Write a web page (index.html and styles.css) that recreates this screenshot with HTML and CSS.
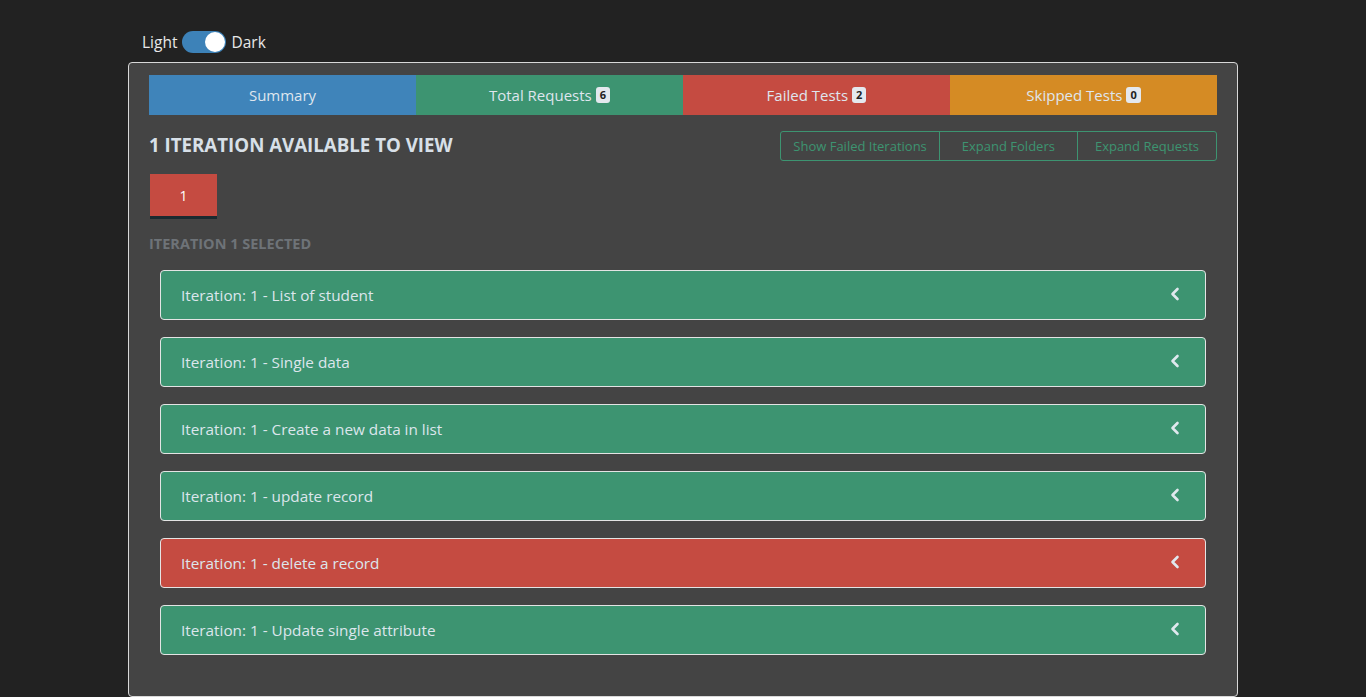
FILE: index.html
```html
<!DOCTYPE html>
<html lang="en">
<head>
<meta charset="utf-8">
<title>Report</title>
<link rel="stylesheet" href="styles.css">
</head>
<body>
<div class="page">
  <div class="theme-toggle">
    <span class="tlabel">Light</span>
    <span class="switch"><span class="knob"></span></span>
    <span class="tlabel">Dark</span>
  </div>
  <div class="panel">
    <div class="tabs">
      <div class="tab tab-blue">Summary</div>
      <div class="tab tab-green">Total Requests <span class="badge">6</span></div>
      <div class="tab tab-red">Failed Tests <span class="badge">2</span></div>
      <div class="tab tab-orange">Skipped Tests <span class="badge">0</span></div>
    </div>
    <div class="head-row">
      <h2 class="title">1 ITERATION AVAILABLE TO VIEW</h2>
      <div class="btn-group">
        <button class="obtn">Show Failed Iterations</button>
        <button class="obtn">Expand Folders</button>
        <button class="obtn">Expand Requests</button>
      </div>
    </div>
    <div class="iter-row">
      <button class="iter-btn">1</button>
    </div>
    <div class="selected">ITERATION 1 SELECTED</div>
    <div class="cards">
      <div class="card card-green"><span>Iteration: 1 - List of student</span><svg class="chev" viewBox="0 0 10 14" width="10" height="14"><path d="M7.5 2 L2.5 7 L7.5 12" fill="none" stroke="currentColor" stroke-width="2.6" stroke-linecap="round" stroke-linejoin="round"/></svg></div>
      <div class="card card-green"><span>Iteration: 1 - Single data</span><svg class="chev" viewBox="0 0 10 14" width="10" height="14"><path d="M7.5 2 L2.5 7 L7.5 12" fill="none" stroke="currentColor" stroke-width="2.6" stroke-linecap="round" stroke-linejoin="round"/></svg></div>
      <div class="card card-green"><span>Iteration: 1 - Create a new data in list</span><svg class="chev" viewBox="0 0 10 14" width="10" height="14"><path d="M7.5 2 L2.5 7 L7.5 12" fill="none" stroke="currentColor" stroke-width="2.6" stroke-linecap="round" stroke-linejoin="round"/></svg></div>
      <div class="card card-green"><span>Iteration: 1 - update record</span><svg class="chev" viewBox="0 0 10 14" width="10" height="14"><path d="M7.5 2 L2.5 7 L7.5 12" fill="none" stroke="currentColor" stroke-width="2.6" stroke-linecap="round" stroke-linejoin="round"/></svg></div>
      <div class="card card-red"><span>Iteration: 1 - delete a record</span><svg class="chev" viewBox="0 0 10 14" width="10" height="14"><path d="M7.5 2 L2.5 7 L7.5 12" fill="none" stroke="currentColor" stroke-width="2.6" stroke-linecap="round" stroke-linejoin="round"/></svg></div>
      <div class="card card-green"><span>Iteration: 1 - Update single attribute</span><svg class="chev" viewBox="0 0 10 14" width="10" height="14"><path d="M7.5 2 L2.5 7 L7.5 12" fill="none" stroke="currentColor" stroke-width="2.6" stroke-linecap="round" stroke-linejoin="round"/></svg></div>
    </div>
  </div>
</div>
</body>
</html>
```
FILE: styles.css
```css
html, body {
  margin: 0;
  padding: 0;
  background: #222222;
  font-family: "Open Sans", "Noto Sans", sans-serif;
  color: #dde3ea;
  overflow: hidden;
}
.page {
  width: 1110px;
  margin: 0 auto;
  padding-top: 29px;
}
.theme-toggle {
  display: flex;
  align-items: center;
  gap: 5px;
  padding-left: 14px;
  height: 26px;
  margin-bottom: 7px;
  font-size: 15.5px;
  color: #e8e8e8;
}
.switch {
  width: 44px;
  height: 22px;
  border-radius: 11px;
  background: #3d82b8;
  position: relative;
  display: inline-block;
}
.knob {
  position: absolute;
  right: 1px;
  top: 1px;
  width: 20px;
  height: 20px;
  border-radius: 50%;
  background: #ffffff;
}
.panel {
  box-sizing: border-box;
  border: 1px solid #d8d8d8;
  border-radius: 4px;
  background: #444444;
  padding: 12px 20px 0 20px;
  height: 635px;
}
.tabs {
  display: grid;
  grid-template-columns: repeat(4, 1fr);
  height: 40px;
}
.tab {
  display: flex;
  align-items: center;
  justify-content: center;
  gap: 4px;
  font-size: 15px;
  color: #dfe6ee;
}
.tab-blue { background: #3f84ba; }
.tab-green { background: #3d9471; }
.tab-red { background: #c54b41; }
.tab-orange { background: #d58b24; }
.badge {
  display: inline-block;
  background: #e4e8ee;
  color: #222;
  font-size: 11px;
  font-weight: 700;
  padding: 1px 4px;
  border-radius: 3px;
  line-height: 14px;
}
.head-row {
  display: flex;
  justify-content: space-between;
  align-items: flex-start;
  margin-top: 16px;
}
.title {
  margin: 1px 0 0 0;
  font-size: 18.7px;
  font-weight: 700;
  color: #d8e0e8;
}
.btn-group {
  display: flex;
  border: 1px solid #3d9471;
  border-radius: 3px;
  height: 28px;
}
.obtn {
  background: transparent;
  border: none;
  border-left: 1px solid #3d9471;
  color: #3d9471;
  font-family: "Open Sans", "Noto Sans", sans-serif;
  font-size: 13px;
  padding: 0 12px;
  height: 28px;
}
.obtn:first-child { border-left: none; }
.obtn:nth-child(2) { padding: 0 22px; }
.obtn:nth-child(3) { padding: 0 17px; }
.iter-row {
  margin-top: 13px;
  padding-left: 1px;
}
.iter-btn {
  width: 67px;
  height: 45px;
  background: #c54b41;
  border: none;
  border-bottom: 3px solid #1b2a30;
  color: #ffffff;
  font-family: "Open Sans", "Noto Sans", sans-serif;
  font-size: 14px;
  padding: 0;
}
.selected {
  margin-top: 15px;
  font-size: 14.5px;
  font-weight: 700;
  color: #6e7378;
}
.cards {
  display: flex;
  flex-direction: column;
  gap: 17px;
  margin: 17px 11px 0 11px;
}
.card {
  height: 50px;
  box-sizing: border-box;
  border: 1px solid #e4e4e4;
  border-radius: 4px;
  display: flex;
  align-items: center;
  justify-content: space-between;
  padding: 0 25px 0 20px;
  font-size: 15.3px;
  color: #dce6ec;
}
.card-green { background: #3d9471; }
.card-red { background: #c54b41; }
.chev {
  color: #e0e8ee;
  margin-top: -3px;
}
```
